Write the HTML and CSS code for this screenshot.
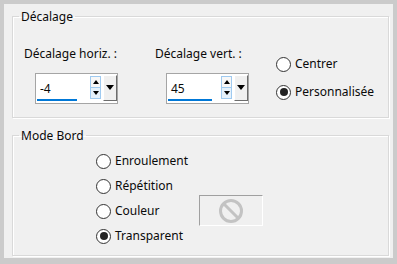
FILE: index.html
```html
<!DOCTYPE html>
<html lang="fr">
<head>
  <meta charset="UTF-8">
  <title>Décalage</title>
  <link rel="stylesheet" href="styles.css">
</head>
<body>
  <div class="window">
    <fieldset class="group offset">
      <legend>Décalage</legend>
      <div class="field">
        <div class="label">Décalage horiz. :</div>
        <div class="spin">
          <span class="value">-4</span>
          <span class="bar bar-h"></span>
          <span class="arrows"><span class="up"></span><span class="down"></span></span>
          <span class="drop"></span>
        </div>
      </div>
      <div class="field second">
        <div class="label">Décalage vert. :</div>
        <div class="spin">
          <span class="value">45</span>
          <span class="bar bar-v"></span>
          <span class="arrows"><span class="up"></span><span class="down"></span></span>
          <span class="drop"></span>
        </div>
      </div>
      <div class="choices">
        <div class="option"><span class="radio"></span>Centrer</div>
        <div class="option"><span class="radio on"></span>Personnalisée</div>
      </div>
    </fieldset>

    <fieldset class="group border">
      <legend>Mode Bord</legend>
      <div class="modes">
        <div class="option"><span class="radio"></span>Enroulement</div>
        <div class="option"><span class="radio"></span>Répétition</div>
        <div class="option"><span class="radio"></span>Couleur</div>
        <div class="option"><span class="radio on"></span>Transparent</div>
      </div>
      <div class="swatch">
        <svg width="26" height="26" viewBox="0 0 26 26">
          <circle cx="13" cy="13" r="10.5" fill="none" stroke="#c3c3c3" stroke-width="3"/>
          <line x1="5.5" y1="5.5" x2="20.5" y2="20.5" stroke="#c3c3c3" stroke-width="3"/>
        </svg>
      </div>
    </fieldset>
  </div>
</body>
</html>
```

FILE: styles.css
```css
body { margin: 0; padding: 4px; background: #cbcbcb; font: 12px "Noto Sans", "DejaVu Sans", sans-serif; color: #0a0a0a; }
.window { width: 389px; height: 254px; background: #f0f0f0; box-sizing: border-box; padding: 4px 0 0 8px; }

.group { margin: 0; padding: 0; width: 377px; box-sizing: border-box; border: 1px solid #d9d9d9; box-shadow: inset 1px 1px 0 #fff, 1px 1px 0 #fff; display: flex; }
.group legend { padding: 0 2px; margin-left: 6px; line-height: 17px; }
.offset { height: 110px; }
.border { height: 129px; margin-top: 9px; }

.field { width: 131px; padding-left: 11px; box-sizing: border-box; }
.field.second { width: 120px; }
.field .label { margin: 21px 0 0 0; line-height: 16px; }
.spin { position: relative; margin: 11px 0 0 11px; width: 83px; height: 31px; box-sizing: border-box; border: 1px solid #a5a5a5; background: #fff; }
.spin .value { position: absolute; left: 4px; top: 6px; line-height: 17px; }
.spin .bar { position: absolute; left: 1px; bottom: 2px; height: 2px; background: #0078d7; }
.bar-h { width: 40px; }
.bar-v { width: 44px; }
.arrows { position: absolute; left: 54px; top: 2px; width: 11px; height: 23px; display: flex; flex-direction: column; }
.arrows span { flex: 1; border: 1px solid #9fcaf0; background: #f7f7f7; position: relative; }
.arrows .down { border-top: 0; background: #e5f1fb; }
.arrows span::after { content: ""; position: absolute; left: 2px; border-left: 3.5px solid transparent; border-right: 3.5px solid transparent; }
.arrows .up::after { top: 3px; border-bottom: 4px solid #000; }
.arrows .down::after { top: 3px; border-top: 4px solid #000; }
.drop { position: absolute; left: 67px; top: 1px; width: 14px; height: 26px; box-sizing: border-box; background: #f0f0f0; border-left: 1px solid #fff; border-top: 1px solid #fff; border-right: 1px solid #6d6d6d; border-bottom: 1px solid #6d6d6d; }
.drop::after { content: ""; position: absolute; left: 2px; top: 9px; border-left: 4.5px solid transparent; border-right: 4.5px solid transparent; border-top: 5px solid #000; }

.choices { margin: 31px 0 0 12px; display: flex; flex-direction: column; gap: 12px; }
.option { display: flex; align-items: center; gap: 4px; line-height: 16px; }
.radio { width: 15px; height: 15px; box-sizing: border-box; border: 1px solid #333; border-radius: 50%; background: #fff; position: relative; }
.radio.on::after { content: ""; position: absolute; left: 2.5px; top: 2.5px; width: 8px; height: 8px; border-radius: 50%; background: #222; }

.modes { margin: 9px 0 0 83px; width: 103px; display: flex; flex-direction: column; gap: 9px; }
.swatch { margin-top: 51px; width: 64px; height: 31px; box-sizing: border-box; border: 1px solid #a0a0a0; border-right-color: #fff; border-bottom-color: #fff; display: flex; align-items: center; justify-content: center; }
```
